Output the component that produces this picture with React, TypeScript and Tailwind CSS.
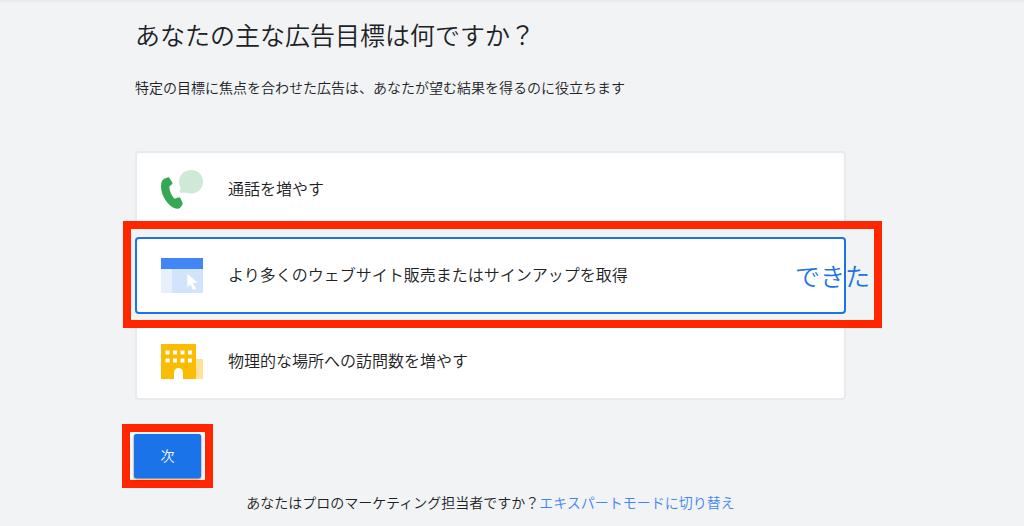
import { useState } from "react";
import clsx from "clsx";

function CallIcon() {
  return (
    <svg width="42" height="40" viewBox="0 0 42 40" aria-hidden="true">
      <path
        d="M30 0a11.8 11.8 0 1 1-4 22.8L18.6 22.8 19.6 17.6A11.8 11.8 0 0 1 30 0Z"
        fill="#ceead6"
      />
      <path
        d="M6.4 7.5Q8 7 8.8 8.4L11.3 12.6Q11.9 13.8 10.8 14.6L8.9 16Q8.2 16.6 8.3 17.6C8.7 21.4 10.4 25.2 12.8 28Q13.5 28.8 14.4 28.4L17.4 27.4Q18.8 27 19.4 28.2L21.5 32.8Q22 34 21.2 35L19.6 37.2Q18.5 38.7 16.2 38.7C12.4 38.7 8.6 35.5 5.5 31.6C2 27 0 21.3 0 16.4Q0 12.4 1.2 10.4Q2.4 8.6 6.4 7.5Z"
        fill="#34a853"
      />
    </svg>
  );
}

function WebsiteIcon() {
  return (
    <svg width="42" height="35" viewBox="0 0 42 35" aria-hidden="true">
      <path d="M0 10h11v25H0Z" fill="#e8f0fe" />
      <path d="M11 10h31v25H11Z" fill="#d2e3fc" />
      <path d="M0 0h42v11H0Z" fill="#4285f4" />
      <path
        d="M26.2 15.8L36.4 24.6L31.8 25.2L35.2 30.6L32 31.9L29.4 26.4L26.4 29Z"
        fill="#fff"
      />
    </svg>
  );
}

function StoreIcon() {
  return (
    <svg width="42" height="35" viewBox="0 0 42 35" aria-hidden="true">
      <path d="M34 15h8v20h-8Z" fill="#fde29b" />
      <path d="M0 0h35v35H22v-6.500a4.500 4.500 0 0 0-9 0V35H0Z" fill="#fbbc04" />
      <path
        d="M4.500 6.500h4v4h-4ZM12 6.500h4v4h-4ZM19.500 6.500h4v4h-4ZM27 6.500h4v4h-4ZM4.500 14.500h4v4h-4ZM12 14.500h4v4h-4ZM19.500 14.500h4v4h-4ZM27 14.500h4v4h-4Z"
        fill="#fff"
      />
    </svg>
  );
}

const GOALS = [
  { id: "calls", label: "通話を増やす", icon: <CallIcon /> },
  {
    id: "website",
    label: "より多くのウェブサイト販売またはサインアップを取得",
    icon: <WebsiteIcon />,
    note: "できた",
  },
  {
    id: "visits",
    label: "物理的な場所への訪問数を増やす",
    icon: <StoreIcon />,
  },
];

export default function App() {
  const [goal, setGoal] = useState("website");

  return (
    <div className="min-h-screen border-t-2 border-[#e8eaed] bg-[#f1f3f4] font-['Noto_Sans_CJK_JP',sans-serif] font-[350] text-[#202124]">
      <main className="pr-[178px] pl-[135px]">
        <h1 className="pt-3.5 text-[25px] leading-9 font-[350]">
          あなたの主な広告目標は何ですか？
        </h1>
        <p className="mt-[25px] text-sm leading-5">
          特定の目標に焦点を合わせた広告は、あなたが望む結果を得るのに役立ちます
        </p>

        <form onSubmit={(e) => e.preventDefault()}>
          <fieldset className="mt-[54px] flex flex-col gap-[9px]">
            {GOALS.map(({ id, label, icon, note }) => (
              <div key={id} className="relative">
                <label
                  className={clsx(
                    "flex h-[77px] cursor-pointer items-center gap-[25px] rounded border-2 bg-white px-6 text-base",
                    goal === id ? "border-[#1a73e8]" : "border-[#e8eaed]",
                  )}
                >
                  <input
                    type="radio"
                    name="goal"
                    value={id}
                    checked={goal === id}
                    onChange={() => setGoal(id)}
                    className="sr-only"
                  />
                  {icon}
                  <span className="pb-[3px]">{label}</span>
                </label>
                {note && (
                  <div className="pointer-events-none absolute -top-4 -right-9 -bottom-3.5 -left-3 z-10 flex items-center justify-end border-8 border-[#ff2600] pr-1">
                    <span className="text-[25px] leading-9 text-[#1a73e8]">
                      {note}
                    </span>
                  </div>
                )}
              </div>
            ))}
          </fieldset>

          <div className="mt-6 -ml-[13px] flex">
            <div className="border-8 border-[#ff2600] bg-white px-1 py-0.5">
              <button
                type="submit"
                className="h-11 w-[67px] cursor-pointer rounded-xs bg-[#1a73e8] pb-[3px] text-sm text-white shadow-sm shadow-black/50"
              >
                次
              </button>
            </div>
          </div>
        </form>

        <p className="mt-1 text-center text-sm leading-5">
          あなたはプロのマーケティング担当者ですか？
          <a href="#" className="text-[#4285f4]">
            エキスパートモードに切り替え
          </a>
        </p>
      </main>
    </div>
  );
}
